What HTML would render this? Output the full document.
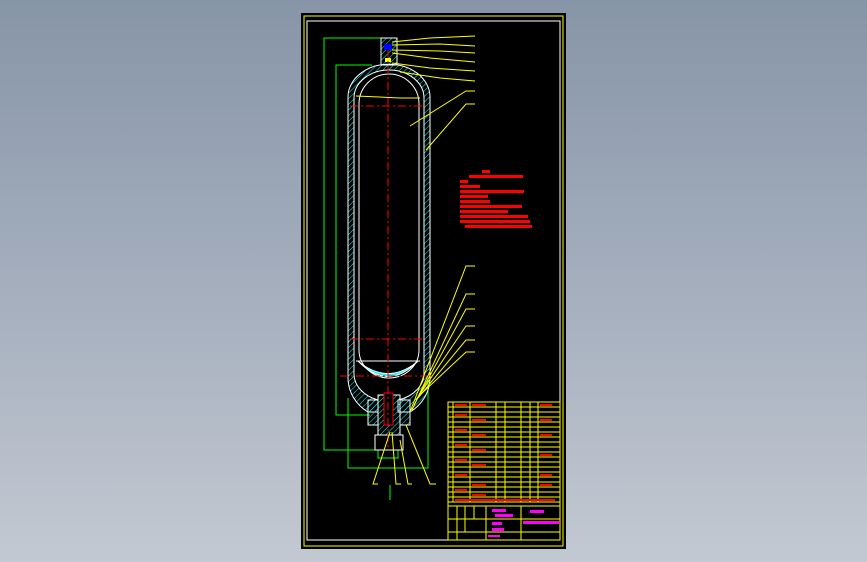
<!DOCTYPE html>
<html><head><style>
html,body{margin:0;padding:0;width:867px;height:562px;overflow:hidden;background:linear-gradient(#8795a8,#aab3c1 60%,#c3c9d2);font-family:"Liberation Sans","Noto Sans CJK SC",sans-serif}
svg{position:absolute;left:0;top:0}
</style></head><body>
<svg width="867" height="562" viewBox="0 0 867 562">
<defs>
<pattern id="h" width="4" height="4" patternUnits="userSpaceOnUse" patternTransform="rotate(45)"><line x1="0" y1="0" x2="0" y2="4" stroke="#0ff" stroke-width="1"/></pattern>
</defs>
<rect x="301" y="13" width="265" height="536" fill="#000"/>
<rect x="304" y="16" width="259" height="530" fill="none" stroke="#ff0" stroke-width="1"/>
<rect x="307" y="21" width="253" height="519" fill="none" stroke="#fff" stroke-width="1"/>
<!-- green dims -->
<g stroke="#0f0" fill="none" stroke-width="1">
<polyline points="381,38 324,38 324,450 378,450"/>
<polyline points="372,65 336,65 336,415 370,415"/>
<polyline points="348,398 348,468 428,468 428,378"/>
<polyline points="378,450 378,458 398,458 398,450"/>
<line x1="390" y1="485" x2="390" y2="500"/>
</g>
<!-- hatched walls -->
<path d="M348,97 A40,32 0 0 1 430,97 L430,378 A41,40 0 0 1 410,412 L398,412 L398,400 A36,28 0 0 0 424,372 L424,98 A35,28 0 0 0 354,98 L354,372 A36,28 0 0 0 378,400 L378,412 L368,412 A41,40 0 0 1 348,378 Z" fill="url(#h)" stroke="#fff" stroke-width="1"/>
<path d="M359,104 A30,30 0 0 1 419,104 L419,350 A30,28 0 0 1 359,350 Z" fill="none" stroke="#fff" stroke-width="1"/>
<rect x="381" y="38" width="16" height="27" fill="url(#h)" stroke="#fff"/>
<rect x="384" y="44" width="8" height="6" fill="#00f"/><rect x="385" y="58" width="6" height="4" fill="#ff0"/>
<path d="M358,361 Q388,392 418,361 L413,365 Q388,382 363,365 Z" fill="#0ff" stroke="#fff"/>
<line x1="356" y1="361" x2="420" y2="361" stroke="#fff"/>
<rect x="378" y="395" width="22" height="40" fill="url(#h)" stroke="#fff"/>
<rect x="368" y="400" width="10" height="25" fill="url(#h)" stroke="#fff"/>
<rect x="400" y="400" width="10" height="25" fill="url(#h)" stroke="#fff"/>
<rect x="384" y="393" width="9" height="32" fill="#000" stroke="#f00"/>
<rect x="375" y="435" width="28" height="15" fill="none" stroke="#fff"/>
<!-- center lines -->
<g stroke="#f00" stroke-dasharray="8,3,2,3" stroke-width="1">
<line x1="388" y1="50" x2="388" y2="450"/>
<line x1="350" y1="106" x2="426" y2="106"/>
<line x1="350" y1="339" x2="426" y2="339"/>
<line x1="340" y1="376" x2="432" y2="376"/>
</g>
<!-- leaders -->
<g stroke="#ff0" fill="none" stroke-width="1">
<polyline points="392,42 430,38 475,36"/>
<polyline points="392,45 440,44 475,46"/>
<polyline points="392,50 440,51 475,53"/>
<polyline points="392,53 430,58 475,62"/>
<polyline points="392,63 430,68 475,71"/>
<polyline points="400,72 440,78 475,81"/>
<polyline points="410,126 466,91 475,91"/>
<polyline points="426,150 466,104 475,104"/>
<polyline points="356,96 400,98 420,98"/>
<polyline points="410,412 466,266 475,266"/>
<polyline points="412,410 466,294 475,294"/>
<polyline points="414,405 466,309 475,309"/>
<polyline points="416,400 466,326 475,326"/>
<polyline points="418,398 466,340 475,340"/>
<polyline points="420,395 466,352 475,352"/>
<polyline points="390,432 373,484 378,484"/>
<polyline points="392,432 396,484 401,484"/>
<polyline points="400,440 408,484 412,484"/>
<polyline points="406,425 430,484 436,484"/>
</g>
<!-- red notes -->
<g fill="#f00">
<rect x="482" y="170" width="8" height="3"/>
<rect x="469" y="175" width="54" height="3"/>
<rect x="460" y="180" width="8" height="3"/>
<rect x="460" y="185" width="20" height="3"/>
<rect x="460" y="190" width="64" height="3"/>
<rect x="460" y="195" width="28" height="3"/>
<rect x="460" y="200" width="30" height="3"/>
<rect x="460" y="205" width="62" height="3"/>
<rect x="460" y="210" width="48" height="3"/>
<rect x="460" y="215" width="68" height="3"/>
<rect x="460" y="220" width="70" height="3"/>
<rect x="465" y="225" width="67" height="3"/>
</g>
<!-- title block -->
<g stroke="#ff0" fill="none" stroke-width="1">
<rect x="448" y="402" width="112" height="138"/>
<path d="M448,407H560M448,412H560M448,417H560M448,422H560M448,427H560M448,432H560M448,437H560M448,442H560M448,447H560M448,452H560M448,457H560M448,462H560M448,467H560M448,472H560M448,477H560M448,482H560M448,487H560M448,492H560M448,497H560M448,502H560"/>
<path d="M453,402V502M470,402V502M496,402V502M505,402V502M521,402V502M530,402V502M538,402V502"/>
<path d="M448,506H560M448,519H560M448,532H560M486,506V540M521,506V540M457,506V540M465,506V532M474,506V519"/>
</g>
<g fill="#f00" font-size="3">
<rect x="455" y="404" width="12" height="2"/><rect x="472" y="404" width="14" height="2"/><rect x="540" y="404" width="12" height="2"/>
<rect x="455" y="414" width="12" height="2"/><rect x="472" y="419" width="14" height="2"/><rect x="540" y="419" width="12" height="2"/>
<rect x="455" y="429" width="12" height="2"/><rect x="472" y="434" width="14" height="2"/><rect x="540" y="434" width="12" height="2"/>
<rect x="455" y="444" width="12" height="2"/><rect x="472" y="449" width="14" height="2"/><rect x="540" y="454" width="12" height="2"/>
<rect x="455" y="459" width="12" height="2"/><rect x="472" y="464" width="14" height="2"/><rect x="540" y="474" width="12" height="2"/>
<rect x="455" y="474" width="12" height="2"/><rect x="472" y="484" width="14" height="2"/><rect x="540" y="484" width="12" height="2"/>
<rect x="455" y="489" width="12" height="2"/><rect x="472" y="494" width="14" height="2"/><rect x="455" y="499" width="100" height="2"/>
</g>
<g fill="#f0f">
<rect x="492" y="509" width="14" height="3"/><rect x="495" y="514" width="18" height="3"/>
<rect x="530" y="510" width="14" height="3"/><rect x="523" y="521" width="36" height="3"/>
<rect x="492" y="522" width="10" height="3"/><rect x="492" y="528" width="12" height="3"/>
<rect x="488" y="535" width="12" height="2"/>
</g>
</svg>
</body></html>
